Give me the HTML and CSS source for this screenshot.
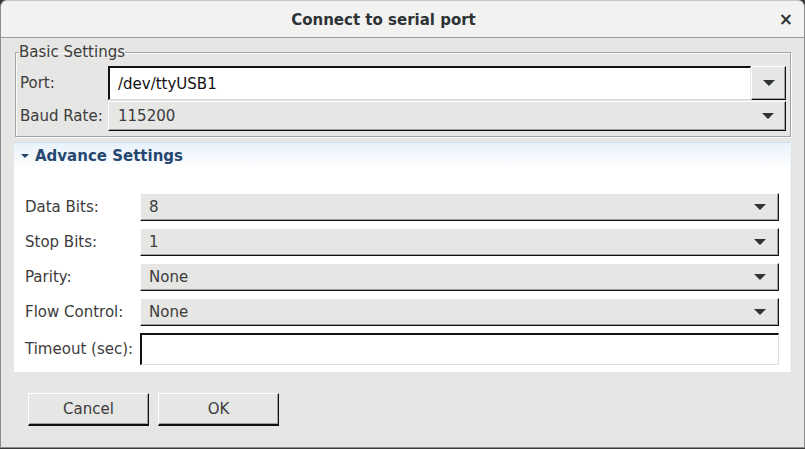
FILE: index.html
```html
<!DOCTYPE html>
<html>
<head>
<meta charset="utf-8">
<link rel="stylesheet" href="styles.css">
</head>
<body>
<div class="window">
  <div class="titlebar">
    <span class="title">Connect to serial port</span>
    <span class="close">×</span>
  </div>
  <div class="content">
    <fieldset class="basic">
      <legend>Basic Settings</legend>
      <div class="form basic-form">
        <label class="lbl">Port:</label>
        <div class="editcombo">
          <div class="edit">/dev/ttyUSB1</div>
          <div class="dropbtn"><svg class="arrow" viewBox="0 0 12 6"><path d="M0 0h12L6 6z"/></svg></div>
        </div>
        <label class="lbl">Baud Rate:</label>
        <div class="combo baud"><span>115200</span><svg class="arrow" viewBox="0 0 12 6"><path d="M0 0h12L6 6z"/></svg></div>
      </div>
    </fieldset>
    <div class="advance">
      <div class="adv-header"><svg class="tri" viewBox="0 0 8 4"><path d="M0 0h8L4 4z"/></svg><span>Advance Settings</span></div>
      <div class="form adv-form">
        <label class="lbl">Data Bits:</label>
        <div class="combo"><span>8</span><svg class="arrow" viewBox="0 0 12 6"><path d="M0 0h12L6 6z"/></svg></div>
        <label class="lbl">Stop Bits:</label>
        <div class="combo"><span>1</span><svg class="arrow" viewBox="0 0 12 6"><path d="M0 0h12L6 6z"/></svg></div>
        <label class="lbl">Parity:</label>
        <div class="combo"><span>None</span><svg class="arrow" viewBox="0 0 12 6"><path d="M0 0h12L6 6z"/></svg></div>
        <label class="lbl">Flow Control:</label>
        <div class="combo"><span>None</span><svg class="arrow" viewBox="0 0 12 6"><path d="M0 0h12L6 6z"/></svg></div>
        <label class="lbl">Timeout (sec):</label>
        <div class="textfield"></div>
      </div>
    </div>
    <div class="buttons">
      <button class="btn">Cancel</button>
      <button class="btn">OK</button>
    </div>
  </div>
</div>
</body>
</html>
```

FILE: styles.css
```css
html, body {
  margin: 0;
  padding: 0;
  background: #3a3a3a;
}
body {
  width: 805px;
  height: 449px;
  overflow: hidden;
  font-family: "DejaVu Sans", sans-serif;
  font-size: 15px;
  color: #3c3c3c;
}
.window {
  width: 805px;
  height: 448px;
  box-sizing: border-box;
  background: #e6e6e4;
  border: 1px solid #8c8c8c;
  border-top-color: #c8c8c8;
  border-radius: 7px 7px 0 0;
  display: flex;
  flex-direction: column;
  overflow: hidden;
}
.titlebar {
  height: 36px;
  flex: none;
  background: #f2f2f1;
  border-bottom: 1px solid #9a9a9a;
  display: flex;
  align-items: center;
  justify-content: center;
  position: relative;
}
.title {
  font-weight: bold;
  font-size: 15px;
  color: #2e3436;
  margin-right: 38px;
  padding-top: 1px;
}
.close {
  position: absolute;
  right: 11px;
  top: 8px;
  font-size: 17px;
  font-weight: bold;
  color: #2e3436;
}
.content {
  flex: 1;
  padding: 6px 13px 0 13px;
  display: flex;
  flex-direction: column;
}
.basic {
  margin: 0 0 0 1px;
  padding: 5px 4px 5px 3px;
  border: 1px solid #a4a4a4;
  box-shadow: inset 1px 1px 0 #fbfbfb, 1px 1px 0 #fbfbfb;
  min-width: 0;
}
.basic legend {
  padding: 0;
  margin-left: 0;
  line-height: 17px;
  font-size: 15px;
  color: #3c3c3c;
}
.form {
  display: grid;
  align-items: center;
}
.basic-form {
  grid-template-columns: 89px 1fr;
  grid-template-rows: 34px 30px;
  row-gap: 1px;
}
.lbl {
  padding-left: 1px;
  white-space: nowrap;
}
.editcombo {
  display: flex;
  height: 34px;
}
.edit {
  flex: 1;
  background: #fff;
  color: #111;
  box-sizing: border-box;
  border-top: 2px solid #111;
  border-left: 2px solid #111;
  border-bottom: 1px solid #d8d8d8;
  border-right: 1px solid #e8e8e8;
  padding-left: 8px;
  display: flex;
  align-items: center;
}
.dropbtn {
  width: 35px;
  box-sizing: border-box;
  background: #e6e6e4;
  border-top: 1px solid #fff;
  border-left: 1px solid #fff;
  border-right: 1px solid #111;
  border-bottom: 1px solid #111;
  box-shadow: inset -1px -1px 0 #a0a0a0;
  display: flex;
  align-items: center;
  justify-content: center;
}
.combo {
  height: 28px;
  box-sizing: border-box;
  background: #e6e6e4;
  border-top: 1px solid #fff;
  border-left: 1px solid #fff;
  border-right: 1px solid #111;
  border-bottom: 1px solid #111;
  box-shadow: inset -1px -1px 0 #a0a0a0;
  display: flex;
  align-items: center;
  justify-content: space-between;
  padding: 0 12px 0 8px;
  color: #3c3c3c;
}
.basic-form .baud {
  height: 30px;
  padding-left: 9px;
  padding-right: 11px;
}
.arrow {
  width: 12px;
  height: 6px;
  fill: #2e3436;
  display: block;
}
.dropbtn .arrow {
  margin-left: 1px;
}
.advance {
  margin-top: 5px;
  background: #fff;
  border-top: 1px solid #cfe0f3;
  border-right: 1px solid #eef3f9;
  display: flex;
  flex-direction: column;
}
.adv-header {
  height: 25px;
  background: linear-gradient(#e8f1fb, #ffffff);
  display: flex;
  align-items: center;
  padding-left: 7px;
  font-weight: bold;
  color: #26476f;
  font-size: 15px;
}
.tri {
  width: 8px;
  height: 4px;
  fill: #26476f;
  margin-right: 6px;
  margin-top: 1px;
}
.adv-form {
  grid-template-columns: 115px 1fr;
  grid-template-rows: 28px 28px 28px 28px 32px;
  row-gap: 7px;
  padding: 25px 11px 7px 11px;
}
.adv-form .lbl {
  padding-left: 0;
}
.textfield {
  height: 32px;
  box-sizing: border-box;
  background: #fff;
  border-top: 2px solid #111;
  border-left: 2px solid #111;
  border-bottom: 1px solid #dcdcdc;
  border-right: 1px solid #dcdcdc;
}
.buttons {
  display: flex;
  gap: 9px;
  padding: 21px 0 0 14px;
}
.btn {
  width: 121px;
  height: 33px;
  box-sizing: border-box;
  font-family: "DejaVu Sans", sans-serif;
  font-size: 15px;
  color: #3c3c3c;
  background: #e6e6e4;
  border-top: 1px solid #fff;
  border-left: 1px solid #fff;
  border-right: 1px solid #111;
  border-bottom: 2px solid #111;
  box-shadow: inset -1px -1px 0 #a0a0a0;
  padding: 0;
}
```
